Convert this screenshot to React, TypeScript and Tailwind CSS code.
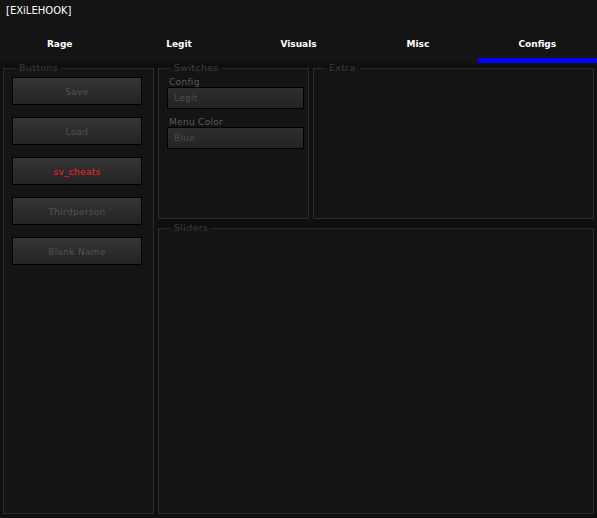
import { ReactNode } from 'react';

const tabs = ['Rage', 'Legit', 'Visuals', 'Misc', 'Configs'];
const buttons = [
  { label: 'Save' },
  { label: 'Load' },
  { label: 'sv_cheats', active: true },
  { label: 'Thirdperson' },
  { label: 'Blank Name' },
];

function GroupBox({ title, className, children }: { title: string; className?: string; children?: ReactNode }) {
  return (
    <fieldset className={`border border-[#2c2c2c] bg-[#141414] ${className ?? ''}`}>
      <legend className="ml-[11px] px-[4px] text-[9.5px] leading-[10px] tracking-[0.3px] text-[#3a3a3a]">{title}</legend>
      {children}
    </fieldset>
  );
}

function MenuButton({ label, active }: { label: string; active?: boolean }) {
  return (
    <button
      className={`h-[28px] w-[130px] border border-black bg-gradient-to-b from-[#353535] to-[#242424] pt-[3px] text-[9px] tracking-[0.3px] ${
        active ? 'text-[#ff2020]' : 'text-[#525252]'
      }`}
    >
      {label}
    </button>
  );
}

function Dropdown({ label, value }: { label: string; value: string }) {
  return (
    <div className="flex flex-col">
      <span className="h-[10px] pl-[2px] text-[9px] leading-[10px] tracking-[0.3px] text-[#5a5a5a]">{label}</span>
      <div className="flex h-[22px] w-[137px] items-center border border-black bg-gradient-to-b from-[#2e2e2e] to-[#232323] pl-[6px] pt-[2px] text-[9px] tracking-[0.3px] text-[#4c4c4c]">
        {value}
      </div>
    </div>
  );
}

export default function App() {
  return (
    <div className="flex h-[518px] w-[597px] flex-col bg-[#0f0f0f] font-['DejaVu_Sans',sans-serif]">
      <div className="bg-[#141414]">
        <div className="h-[31px] pl-[6px] pt-[5px] text-[10px] leading-[12px] text-white">[EXiLEHOOK]</div>
        <div className="grid h-[32px] grid-cols-5">
          {tabs.map((t) => (
            <div key={t} className="flex flex-col">
              <div className="flex h-[27px] items-center justify-center text-[9px] font-bold text-white">{t}</div>
              <div className={`h-[5px] ${t === 'Configs' ? 'bg-[#0000ff]' : ''}`} />
            </div>
          ))}
        </div>
      </div>
      <div className="flex flex-1 gap-[4px] px-[3px] pb-[4px]">
        <GroupBox title="Buttons" className="w-[151px]">
          <div className="flex flex-col gap-[12px] pl-[8px] pt-[4px]">
            {buttons.map((b) => (
              <MenuButton key={b.label} label={b.label} active={b.active} />
            ))}
          </div>
        </GroupBox>
        <div className="flex flex-1 flex-col gap-[4px]">
          <div className="flex h-[156px] gap-[4px]">
            <GroupBox title="Switches" className="w-[151px]">
              <div className="flex flex-col gap-[8px] pl-[8px] pt-[4px]">
                <Dropdown label="Config" value="Legit" />
                <Dropdown label="Menu Color" value="Blue" />
              </div>
            </GroupBox>
            <GroupBox title="Extra" className="flex-1" />
          </div>
          <GroupBox title="Sliders" className="flex-1" />
        </div>
      </div>
    </div>
  );
}
